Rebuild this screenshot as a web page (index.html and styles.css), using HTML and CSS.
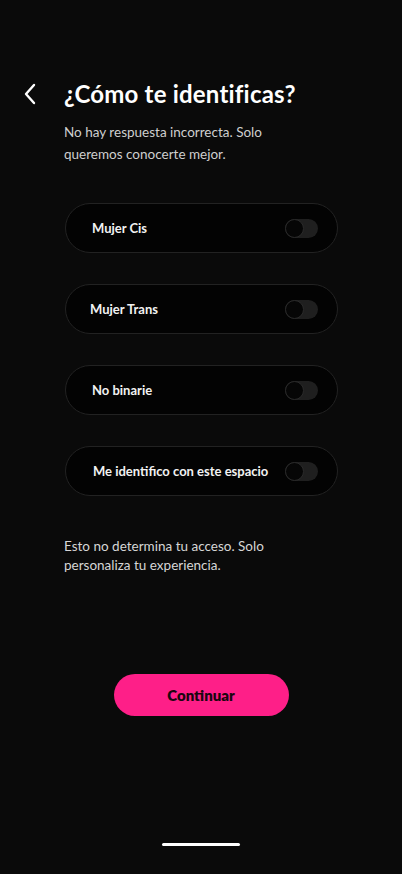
FILE: index.html
```html
<!DOCTYPE html>
<html lang="es">
<head>
<meta charset="utf-8">
<link rel="stylesheet" href="styles.css">
</head>
<body>
<div class="screen">
  <header class="header">
    <button class="back" aria-label="Volver">
      <svg width="14" height="22" viewBox="0 0 14 22"><path d="M11 2 L3 11 L11 20" fill="none" stroke="#fff" stroke-width="2.4" stroke-linecap="round" stroke-linejoin="round"/></svg>
    </button>
    <h1 class="title">¿Cómo te identificas?</h1>
  </header>
  <p class="subtitle">No hay respuesta incorrecta. Solo<br>queremos conocerte mejor.</p>
  <div class="options">
    <div class="option"><span class="label">Mujer Cis</span><span class="toggle"><span class="knob"></span></span></div>
    <div class="option"><span class="label l-trans">Mujer Trans</span><span class="toggle"><span class="knob"></span></span></div>
    <div class="option"><span class="label">No binarie</span><span class="toggle"><span class="knob"></span></span></div>
    <div class="option"><span class="label l-me">Me identifico con este espacio</span><span class="toggle"><span class="knob"></span></span></div>
  </div>
  <p class="note">Esto no determina tu acceso. Solo<br>personaliza tu experiencia.</p>
  <div class="actions"><button class="continue">Continuar</button></div>
  <div class="home-indicator"></div>
</div>
</body>
</html>
```
FILE: styles.css
```css
* { box-sizing: border-box; }
html, body { margin: 0; padding: 0; background: #0a0a0a; }
body { font-family: "Lato", "Inter", sans-serif; color: #fff; }
.screen { width: 402px; height: 874px; display: flex; flex-direction: column; padding-top: 78px; }
.header { display: flex; align-items: center; height: 32px; }
.back { background: none; border: 0; padding: 0; margin-left: 23px; width: 41px; height: 32px; display: flex; align-items: center; cursor: pointer; }
.title { margin: 0; font-size: 24px; font-weight: 700; letter-spacing: 0.2px; line-height: 32px; }
.subtitle { margin: 11px 0 0 64px; font-size: 13.5px; line-height: 22px; color: #cfcfcf; font-weight: 400; }
.options { display: flex; flex-direction: column; gap: 31px; margin: 38px 0 0 65px; width: 273px; }
.option { height: 50px; border-radius: 25px; background: #030303; border: 1px solid #222; display: flex; align-items: center; justify-content: space-between; padding: 0 19px 0 26px; }
.label { font-size: 13px; font-weight: 700; color: #f2f2f2; }
.l-trans { margin-left: -2px; }
.l-me { margin-left: 1px; }
.toggle { width: 33px; height: 19px; border-radius: 10px; background: #1f1f1f; position: relative; }
.knob { position: absolute; left: 0; top: 0; width: 19px; height: 19px; border-radius: 50%; background: #060606; border: 1px solid #2a2a2a; }
.note { margin: 41px 0 0 64px; font-size: 13.5px; line-height: 19px; color: #d6d6d6; }
.actions { margin-top: 99px; display: flex; justify-content: center; }
.continue { width: 175px; height: 42px; border: 0; border-radius: 21px; background: #fe1f88; color: #1a0610; font-family: "Lato", sans-serif; font-weight: 800; font-size: 15px; }
.home-indicator { margin: 127px auto 0; width: 78px; height: 3px; border-radius: 2px; background: #fff; }
```
